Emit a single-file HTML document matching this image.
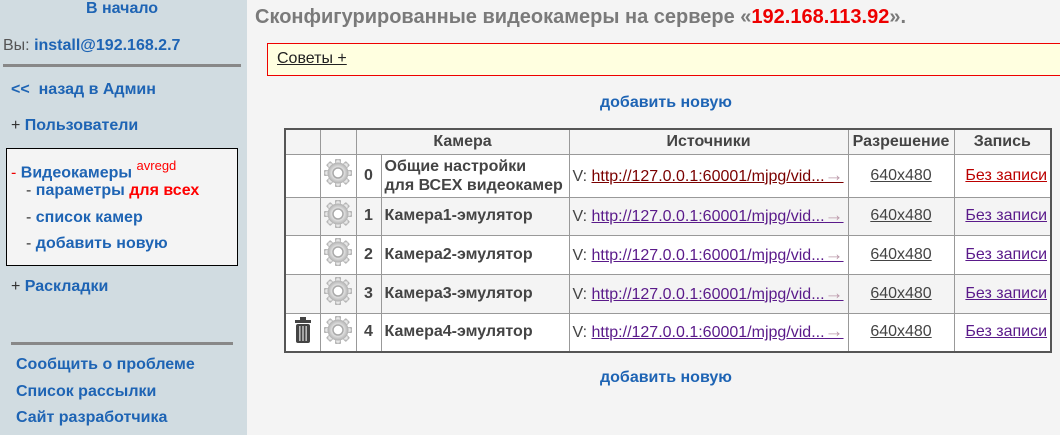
<!DOCTYPE html>
<html><head><meta charset="utf-8"><style>
*{box-sizing:border-box}
body{margin:0;width:1060px;height:435px;background:#f4f4f4;font-family:"Liberation Sans",Arial,sans-serif;font-size:16px;position:relative;overflow:hidden}
.side{position:absolute;left:0;top:0;width:247px;height:435px;background:#d1dce1}
.b{color:#1e64b4;font-weight:bold}
.abs{position:absolute;white-space:nowrap}
.hr{position:absolute;height:3px;background:#888}
.box{position:absolute;left:6px;top:148px;width:232px;height:118px;border:1px solid #000;background:#f4f4f4}
h1{position:absolute;left:255px;top:6px;margin:0;font-size:20px;color:#7a7a7a;font-weight:bold;white-space:nowrap}
.tip{position:absolute;left:267px;top:43px;width:800px;height:33px;background:#ffffe0;border:1px solid #e00;border-right:none}
table{position:absolute;left:284px;top:128px;border-collapse:collapse;border:2px solid #555;table-layout:fixed;width:766px}
td,th{border:1px solid #999;padding:0 3px;color:#444;white-space:nowrap;overflow:hidden}
th{height:25px;font-size:16px;background:#f4f4f4}
tr.w td{background:#fff}tr.g td{background:#f4f4f4}
td.n{font-weight:bold;text-align:center}
td.c{font-weight:bold}
a{color:#7a0000}
.u{text-decoration:underline}
.ar{font-size:19px;color:#b9a}
</style></head><body>
<div class="side">
<div class="abs b" style="left:86px;top:0">В начало</div>
<div class="abs" style="left:3px;top:37px;color:#555">Вы: <span class="b">install@192.168.2.7</span></div>
<div class="hr" style="left:3px;top:64px;width:238px"></div>
<div class="abs b" style="left:11px;top:81px">&lt;&lt;&nbsp; назад в Админ</div>
<div class="abs" style="left:11px;top:117px;color:#333">+ <span class="b">Пользователи</span></div>
<div class="box"></div>
<div class="abs" style="left:11px;top:159px"><span style="color:#e00">-</span> <span class="b">Видеокамеры</span> <sup style="color:#f00;font-size:13px;position:relative;top:-1px">avregd</sup></div>
<div class="abs" style="left:26px;top:182px;color:#333">- <span class="b">параметры</span> <b style="color:#f00">для всех</b></div>
<div class="abs" style="left:26px;top:209px;color:#333">- <span class="b">список камер</span></div>
<div class="abs" style="left:26px;top:235px;color:#333">- <span class="b">добавить новую</span></div>
<div class="abs" style="left:11px;top:278px;color:#333">+ <span class="b">Раскладки</span></div>
<div class="hr" style="left:11px;top:342px;width:222px"></div>
<div class="abs b" style="left:16px;top:356px">Сообщить о проблеме</div>
<div class="abs b" style="left:16px;top:383px">Список рассылки</div>
<div class="abs b" style="left:16px;top:409px">Сайт разработчика</div>
</div>
<h1>Сконфигурированные видеокамеры на сервере «<span style="color:#e00">192.168.113.92</span>».</h1>
<div class="tip"><span class="abs u" style="left:9px;top:6px;color:#222">Советы +</span></div>
<div class="abs b" style="left:600px;top:94px">добавить новую</div>
<table>
<colgroup><col style="width:35px"><col style="width:36px"><col style="width:25px"><col style="width:188px"><col style="width:279px"><col style="width:106px"><col style="width:97px"></colgroup>
<tr><th></th><th></th><th colspan="2">Камера</th><th>Источники</th><th>Разрешение</th><th>Запись</th></tr>
<tr class="w" style="height:43px"><td></td><td>G</td><td class="n">0</td><td class="c" style="line-height:19px">Общие настройки<br>для ВСЕХ видеокамер</td><td>V: <a class="u">http://127.0.0.1:60001/mjpg/vid...<span class="ar">→</span></a></td><td style="text-align:center"><span class="u">640x480</span></td><td style="text-align:right"><a class="u" style="color:#b00">Без записи</a></td></tr>
<tr class="g" style="height:38px"><td></td><td>G</td><td class="n">1</td><td class="c">Камера1-эмулятор</td><td>V: <a class="u" style="color:#5a1a8a">http://127.0.0.1:60001/mjpg/vid...<span class="ar">→</span></a></td><td style="text-align:center"><span class="u">640x480</span></td><td style="text-align:right"><a class="u" style="color:#5a1a8a">Без записи</a></td></tr>
<tr class="w" style="height:39px"><td></td><td>G</td><td class="n">2</td><td class="c">Камера2-эмулятор</td><td>V: <a class="u" style="color:#5a1a8a">http://127.0.0.1:60001/mjpg/vid...<span class="ar">→</span></a></td><td style="text-align:center"><span class="u">640x480</span></td><td style="text-align:right"><a class="u" style="color:#5a1a8a">Без записи</a></td></tr>
<tr class="g" style="height:39px"><td></td><td>G</td><td class="n">3</td><td class="c">Камера3-эмулятор</td><td>V: <a class="u" style="color:#5a1a8a">http://127.0.0.1:60001/mjpg/vid...<span class="ar">→</span></a></td><td style="text-align:center"><span class="u">640x480</span></td><td style="text-align:right"><a class="u" style="color:#5a1a8a">Без записи</a></td></tr>
<tr class="w" style="height:39px"><td style="text-align:center"><svg width="18" height="26" viewBox="0 0 18 26"><rect x="6" y="0" width="6" height="3" fill="#444"/><rect x="1" y="3" width="16" height="3" fill="#444"/><rect x="2" y="7" width="14" height="19" rx="2" fill="#444"/><rect x="5" y="9" width="1.6" height="15" fill="#bbb"/><rect x="8.2" y="9" width="1.6" height="15" fill="#bbb"/><rect x="11.4" y="9" width="1.6" height="15" fill="#bbb"/></svg></td><td>G</td><td class="n">4</td><td class="c">Камера4-эмулятор</td><td>V: <a class="u" style="color:#5a1a8a">http://127.0.0.1:60001/mjpg/vid...<span class="ar">→</span></a></td><td style="text-align:center"><span class="u">640x480</span></td><td style="text-align:right"><a class="u" style="color:#5a1a8a">Без записи</a></td></tr>
</table>
<div class="abs b" style="left:600px;top:369px">добавить новую</div>
<script>
document.querySelectorAll('td').forEach(function(t){if(t.textContent==='G'){t.innerHTML='<svg width="30" height="30" viewBox="-15 -15 30 30"><defs><radialGradient id="gg"><stop offset="0.5" stop-color="#e8e8e8"/><stop offset="1" stop-color="#b0b0b0"/></radialGradient></defs><g fill="url(#gg)">'+[0,45,90,135,180,225,270,315].map(function(a){return '<rect x="-3" y="-14" width="6" height="7" rx="1" transform="rotate('+a+')"/>'}).join('')+'<circle r="10.5"/></g><circle r="5" fill="#fff" stroke="#aaa" stroke-width="1.5"/></svg>';t.style.textAlign='center';t.style.padding='0';}});
</script>
</body></html>
